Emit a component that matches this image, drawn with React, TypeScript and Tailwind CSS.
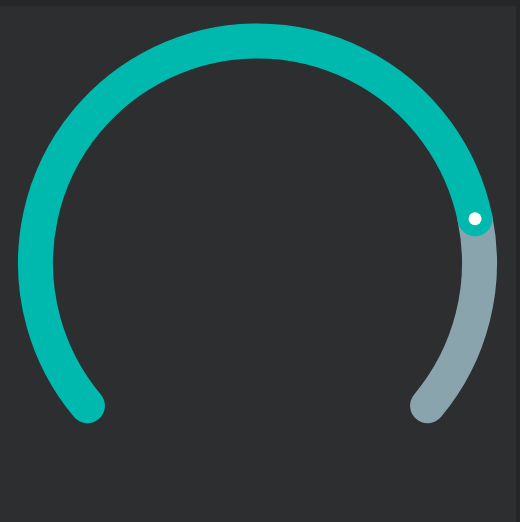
const CX = 257.5
const CY = 263
const R = 222
const START = 140
const END = 400
const VALUE = 348.5

function pt(deg: number) {
  const a = (deg * Math.PI) / 180
  return [CX + R * Math.cos(a), CY + R * Math.sin(a)]
}

function arc(from: number, to: number) {
  const [x1, y1] = pt(from)
  const [x2, y2] = pt(to)
  const large = to - from > 180 ? 1 : 0
  return `M ${x1} ${y1} A ${R} ${R} 0 ${large} 1 ${x2} ${y2}`
}

export default function App() {
  const [hx, hy] = pt(VALUE)
  return (
    <div className="w-[520px] h-[522px] bg-[#252628] flex flex-col">
      <div className="h-[6px] shrink-0" />
      <div className="flex flex-1">
        <div className="w-[516px] bg-[#2d2e30] relative">
          <svg width="516" height="516" viewBox="0 6 516 516" className="block">
            <path d={arc(VALUE, END)} stroke="#8aa4ad" strokeWidth="35" fill="none" strokeLinecap="round" />
            <path d={arc(START, VALUE)} stroke="#00b9ae" strokeWidth="35" fill="none" strokeLinecap="round" />
            <circle cx={hx} cy={hy} r="6.5" fill="#ffffff" />
          </svg>
        </div>
      </div>
    </div>
  )
}
